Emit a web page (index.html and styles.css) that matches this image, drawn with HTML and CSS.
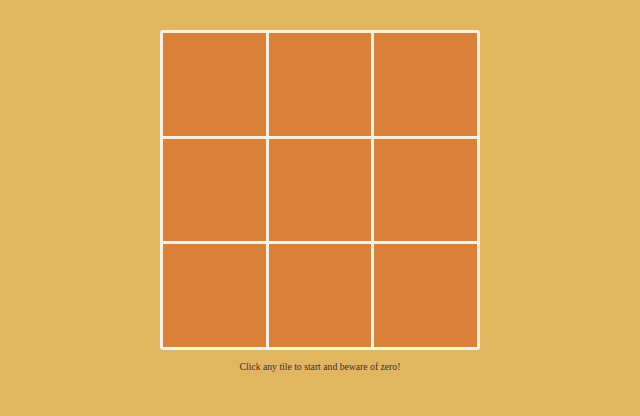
FILE: index.html
```html
<!DOCTYPE html>
<html>
<head>
<meta charset="utf-8">
<link rel="stylesheet" href="styles.css">
</head>
<body>
<main class="game">
  <div class="board">
    <div class="tile"></div><div class="tile"></div><div class="tile"></div>
    <div class="tile"></div><div class="tile"></div><div class="tile"></div>
    <div class="tile"></div><div class="tile"></div><div class="tile"></div>
  </div>
  <p class="hint">Click any tile to start and beware of zero!</p>
</main>
</body>
</html>
```
FILE: styles.css
```css
html, body {
  margin: 0;
  padding: 0;
  background: #e2b560;
  height: 100%;
}
.game {
  display: flex;
  flex-direction: column;
  align-items: center;
  padding-top: 30px;
}
.board {
  width: 320px;
  height: 320px;
  box-sizing: border-box;
  padding: 3px;
  gap: 3px;
  background: #fbf0e2;
  border-radius: 3px;
  display: grid;
  grid-template-columns: repeat(3, 1fr);
  grid-template-rows: repeat(3, 1fr);
}
.tile {
  background: #da823a;
}
.hint {
  margin: 10px 0 0;
  font-family: "Liberation Serif", "Times New Roman", serif;
  font-size: 9.7px;
  color: #3f3222;
  line-height: 14px;
}
```
